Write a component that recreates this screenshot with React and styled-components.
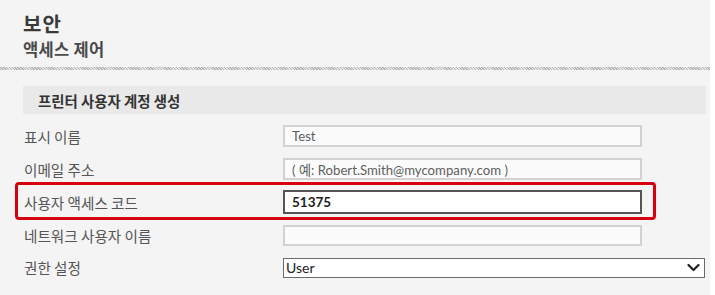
import React from "react";
import styled, { createGlobalStyle } from "styled-components";

const GlobalStyle = createGlobalStyle`
  body {
    margin: 0;
    background: #ffffff;
    font-family: Lato, "Noto Sans CJK KR", sans-serif;
  }
`;

const Page = styled.div`
  width: 710px;
  height: 295px;
  background: #f4f4f4;
  overflow: hidden;
`;

const Heading = styled.header`
  padding: 10px 0 0 23px;
  height: 59px;
  box-sizing: border-box;
`;

const Title = styled.h1`
  margin: 0;
  font-family: "Noto Sans CJK KR", sans-serif;
  font-size: 20px;
  letter-spacing: 1px;
  line-height: 28px;
  font-weight: 700;
  color: #3a3a3a;
`;

const SubTitle = styled.h2`
  margin: 0;
  font-family: "Noto Sans CJK KR", sans-serif;
  font-size: 16.5px;
  letter-spacing: 0.3px;
  line-height: 22px;
  font-weight: 700;
  color: #4a4a4a;
`;

const Divider = styled.div`
  height: 3px;
  margin-top: 8px;
  background: repeating-linear-gradient(
    45deg,
    #b4b4b4 0px,
    #b4b4b4 1px,
    #e6e6e6 1px,
    #e6e6e6 2px
  );
`;

const Section = styled.section`
  padding: 16px 4px 0 0;
`;

const SectionHeader = styled.div`
  margin-left: 23px;
  height: 28px;
  display: flex;
  align-items: center;
  padding-left: 15px;
  background: #e9e9e9;
  font-family: "Noto Sans CJK KR", sans-serif;
  font-size: 14.4px;
  font-weight: 700;
  color: #333333;
`;

const Form = styled.div`
  display: flex;
  flex-direction: column;
  align-items: flex-start;
  padding: 0 0 0 15px;
`;

const Row = styled.div`
  display: grid;
  grid-template-columns: 259px ${(p) => p.$field}px;
  align-items: center;
  margin-top: ${(p) => p.$gap}px;
  border: 3px solid ${(p) => (p.$highlight ? "#d7000f" : "transparent")};
  border-radius: ${(p) => (p.$highlight ? "4px" : "0")};
  padding: ${(p) => (p.$highlight ? "5px 11px 3px 6px" : "0 0 0 6px")};
  ${(p) => !p.$highlight && "border-width: 0 3px; "}
`;

const Label = styled.label`
  font-family: "Noto Sans CJK KR", sans-serif;
  font-size: 14.6px;
  color: #555555;
  white-space: nowrap;
`;

const TextBox = styled.div`
  box-sizing: border-box;
  height: ${(p) => p.$h}px;
  display: flex;
  align-items: center;
  padding-left: 7px;
  background: ${(p) => (p.$active ? "#ffffff" : "#fbfbfb")};
  border: 2px solid ${(p) => (p.$active ? "#555555" : "#d2d2d2")};
  font-family: Lato, "Noto Sans CJK KR", sans-serif;
  font-size: ${(p) => (p.$active ? 13.5 : 13.2)}px;
  font-weight: ${(p) => (p.$active ? 700 : 400)};
  color: ${(p) => (p.$active ? "#1e1e1e" : "#5e5e5e")};
  white-space: nowrap;
`;

const SelectBox = styled.div`
  box-sizing: border-box;
  height: 20px;
  display: flex;
  align-items: center;
  justify-content: space-between;
  padding: 0 4px 0 2px;
  background: #ffffff;
  border: 1px solid #6a6a6a;
  font-family: Lato, sans-serif;
  font-size: 14px;
  color: #222222;
`;

function Chevron() {
  return (
    <svg width="13" height="9" viewBox="0 0 13 9">
      <path
        d="M1.5 2 L6.5 7 L11.5 2"
        fill="none"
        stroke="#222"
        strokeWidth="2.2"
        strokeLinecap="round"
        strokeLinejoin="round"
      />
    </svg>
  );
}

const rows = [
  { label: "표시 이름", value: "Test", gap: 11, h: 22 },
  {
    label: "이메일 주소",
    value: "( 예: Robert.Smith@mycompany.com )",
    gap: 11,
    h: 22,
  },
  { label: "사용자 액세스 코드", value: "51375", gap: 2, h: 24, highlight: true },
  { label: "네트워크 사용자 이름", value: "", gap: 5, h: 21 },
];

export default function App() {
  return (
    <>
      <GlobalStyle />
      <Page>
        <Heading>
          <Title>보안</Title>
          <SubTitle>액세스 제어</SubTitle>
        </Heading>
        <Divider />
        <Section>
          <SectionHeader>프린터 사용자 계정 생성</SectionHeader>
          <Form>
            {rows.map((r) => (
              <Row key={r.label} $gap={r.gap} $field={359} $highlight={r.highlight}>
                <Label>{r.label}</Label>
                <TextBox $h={r.h} $active={r.highlight}>
                  {r.value}
                </TextBox>
              </Row>
            ))}
            <Row $gap={11} $field={422}>
              <Label>권한 설정</Label>
              <SelectBox>
                <span>User</span>
                <Chevron />
              </SelectBox>
            </Row>
          </Form>
        </Section>
      </Page>
    </>
  );
}
